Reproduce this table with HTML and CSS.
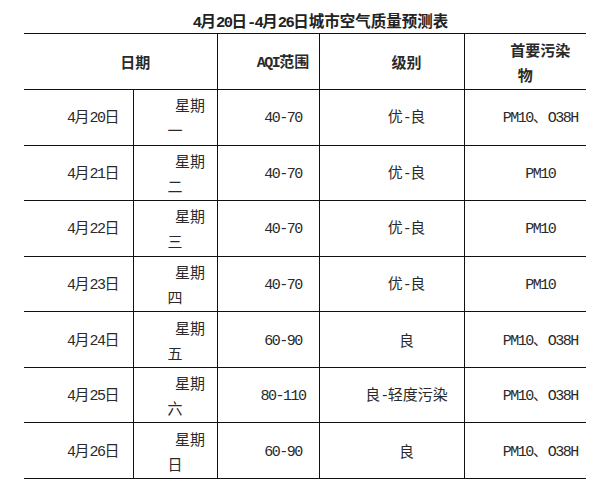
FILE: index.html
```html
<!DOCTYPE html>
<html lang="zh-CN">
<head>
<meta charset="utf-8">
<title>城市空气质量预测表</title>
<link rel="stylesheet" href="styles.css">
</head>
<body>
<div class="page">
  <h1 class="title"><span class="en">4</span>月<span class="en">20</span>日<span class="en">-4</span>月<span class="en">26</span>日城市空气质量预测表</h1>
  <table class="aqi">
    <colgroup>
      <col class="c-date"><col class="c-week"><col class="c-aqi"><col class="c-level"><col class="c-pol">
    </colgroup>
    <thead>
      <tr>
        <th colspan="2">日期</th>
        <th><span class="en">AQI</span>范围</th>
        <th>级别</th>
        <th class="narrow">首要污染物</th>
      </tr>
    </thead>
    <tbody>
      <tr>
        <td><span class="en">4</span>月<span class="en">20</span>日</td>
        <td>星期一</td>
        <td><span class="en">40-70</span></td>
        <td>优<span class="en">-</span>良</td>
        <td><span class="en">PM10</span>、<span class="en">O38H</span></td>
      </tr>
      <tr>
        <td><span class="en">4</span>月<span class="en">21</span>日</td>
        <td>星期二</td>
        <td><span class="en">40-70</span></td>
        <td>优<span class="en">-</span>良</td>
        <td><span class="en">PM10</span></td>
      </tr>
      <tr>
        <td><span class="en">4</span>月<span class="en">22</span>日</td>
        <td>星期三</td>
        <td><span class="en">40-70</span></td>
        <td>优<span class="en">-</span>良</td>
        <td><span class="en">PM10</span></td>
      </tr>
      <tr>
        <td><span class="en">4</span>月<span class="en">23</span>日</td>
        <td>星期四</td>
        <td><span class="en">40-70</span></td>
        <td>优<span class="en">-</span>良</td>
        <td><span class="en">PM10</span></td>
      </tr>
      <tr>
        <td><span class="en">4</span>月<span class="en">24</span>日</td>
        <td>星期五</td>
        <td><span class="en">60-90</span></td>
        <td>良</td>
        <td><span class="en">PM10</span>、<span class="en">O38H</span></td>
      </tr>
      <tr>
        <td><span class="en">4</span>月<span class="en">25</span>日</td>
        <td>星期六</td>
        <td><span class="en">80-110</span></td>
        <td>良<span class="en">-</span>轻度污染</td>
        <td><span class="en">PM10</span>、<span class="en">O38H</span></td>
      </tr>
      <tr>
        <td><span class="en">4</span>月<span class="en">26</span>日</td>
        <td>星期日</td>
        <td><span class="en">60-90</span></td>
        <td>良</td>
        <td><span class="en">PM10</span>、<span class="en">O38H</span></td>
      </tr>
    </tbody>
  </table>
</div>
</body>
</html>
```
FILE: styles.css
```css
html, body {
  margin: 0;
  padding: 0;
  background: #ffffff;
}

body {
  font-family: "Noto Sans CJK SC", "Noto Sans", sans-serif;
  color: #2a2a2a;
}

.page {
  width: 562px;
  margin-left: 24px;
  padding-top: 8px;
}

.title {
  margin: 0;
  height: 25px;
  font-size: 15.5px;
  line-height: 25px;
  font-weight: bold;
  text-align: center;
  text-indent: 2em;
  color: #222;
}

.en {
  font-family: "Liberation Mono", monospace;
  letter-spacing: -1.5px;
}

.title .en {
  letter-spacing: -1.6px;
}

.aqi {
  width: 562px;
  table-layout: fixed;
  border-collapse: collapse;
  font-size: 15px;
  line-height: 25px;
}

.c-date { width: 109px; }
.c-week { width: 84px; }
.c-aqi { width: 102px; }
.c-level { width: 145px; }
.c-pol { width: 122px; }

.aqi th,
.aqi td {
  border: 1px solid #111;
  text-align: center;
  text-indent: 2em;
  vertical-align: middle;
  height: 54.57px;
  padding: 0 6px;
}

.aqi th {
  font-weight: bold;
  height: 55px;
  padding: 0 4px;
}

.aqi th.narrow {
  padding: 0 10px;
}

.aqi tr > :first-child {
  border-left: none;
}

.aqi tr > :last-child {
  border-right: none;
}
```
